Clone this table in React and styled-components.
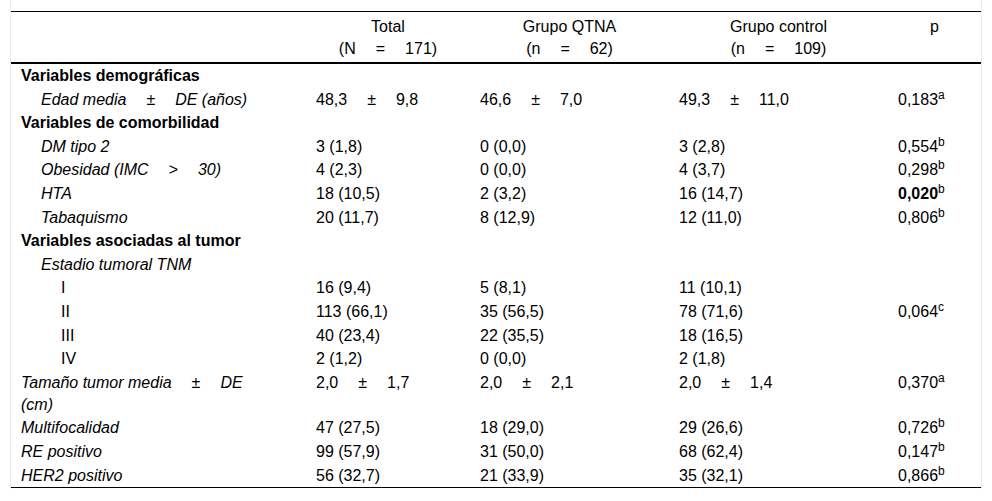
import React from "react";
import styled, { createGlobalStyle } from "styled-components";

const Global = createGlobalStyle`
  html, body {
    margin: 0;
    padding: 0;
    background: #ffffff;
  }
  body {
    font-family: Arial, "Liberation Sans", sans-serif;
    color: #000000;
  }
`;

const Frame = styled.div`
  box-sizing: border-box;
  width: 972px;
  margin-left: 10px;
  padding: 11px 0 1px;
  border-left: 1px solid #ebebeb;
  border-right: 1px solid #ebebeb;
`;

const Table = styled.table`
  width: 970px;
  border-collapse: collapse;
  table-layout: fixed;
  font-size: 16px;
  line-height: 22px;
  border-top: 1px solid #000;
  border-bottom: 1px solid #000;
`;

const HeadRow = styled.tr`
  border-bottom: 2px solid #000;
`;

const HeadCell = styled.th`
  font-weight: normal;
  text-align: center;
  vertical-align: top;
  padding: 4px 10px 2px;
`;

const LabelCell = styled.td`
  vertical-align: top;
  padding: 1px 36px 0.6px ${(p) => 10 + (p.$level || 0) * 20}px;
  font-weight: ${(p) => (p.$bold ? "bold" : "normal")};
  font-style: ${(p) => (p.$italic ? "italic" : "normal")};
`;

const DataCell = styled.td`
  vertical-align: top;
  padding: 1px 10px 0.6px;
  white-space: nowrap;
`;

const Gap = styled.span`
  display: inline-block;
  width: ${(p) => p.$w || 20}px;
`;

const Sup = styled.sup`
  font-size: 12px;
  line-height: 0;
  font-weight: normal;
  vertical-align: 6px;
`;

const Strong = styled.b`
  font-weight: bold;
`;

const PM = ({ a, b }) => (
  <>
    {a}
    <Gap />±<Gap />
    {b}
  </>
);

const PVal = ({ v, s, bold }) => (
  <>
    {bold ? <Strong>{v}</Strong> : v}
    <Sup>{s}</Sup>
  </>
);

const Section = ({ children }) => (
  <tr>
    <LabelCell $bold>{children}</LabelCell>
    <DataCell />
    <DataCell />
    <DataCell />
    <DataCell />
  </tr>
);

const Row = ({ label, level = 1, italic = true, total, qtna, control, p }) => (
  <tr>
    <LabelCell $level={level} $italic={italic}>
      {label}
    </LabelCell>
    <DataCell>{total}</DataCell>
    <DataCell>{qtna}</DataCell>
    <DataCell>{control}</DataCell>
    <DataCell>{p}</DataCell>
  </tr>
);

const Count = ({ n }) => (
  <>
    ({n}
    <Gap />=<Gap />
  </>
);

export default function App() {
  return (
    <>
      <Global />
      <Frame>
        <Table>
          <colgroup>
            <col style={{ width: 295 }} />
            <col style={{ width: 164 }} />
            <col style={{ width: 199 }} />
            <col style={{ width: 219 }} />
            <col style={{ width: 93 }} />
          </colgroup>
          <thead>
            <HeadRow>
              <HeadCell />
              <HeadCell>
                Total
                <br />
                <Count n="N" />
                171)
              </HeadCell>
              <HeadCell>
                Grupo QTNA
                <br />
                <Count n="n" />
                62)
              </HeadCell>
              <HeadCell>
                Grupo control
                <br />
                <Count n="n" />
                109)
              </HeadCell>
              <HeadCell>p</HeadCell>
            </HeadRow>
          </thead>
          <tbody>
            <Section>Variables demográficas</Section>
            <Row
              label={
                <>
                  Edad media<Gap />±<Gap />DE (años)
                </>
              }
              total={<PM a="48,3" b="9,8" />}
              qtna={<PM a="46,6" b="7,0" />}
              control={<PM a="49,3" b="11,0" />}
              p={<PVal v="0,183" s="a" />}
            />
            <Section>Variables de comorbilidad</Section>
            <Row label="DM tipo 2" total="3 (1,8)" qtna="0 (0,0)" control="3 (2,8)" p={<PVal v="0,554" s="b" />} />
            <Row
              label={
                <>
                  Obesidad (IMC<Gap />&gt;<Gap />30)
                </>
              }
              total="4 (2,3)"
              qtna="0 (0,0)"
              control="4 (3,7)"
              p={<PVal v="0,298" s="b" />}
            />
            <Row label="HTA" total="18 (10,5)" qtna="2 (3,2)" control="16 (14,7)" p={<PVal v="0,020" s="b" bold />} />
            <Row label="Tabaquismo" total="20 (11,7)" qtna="8 (12,9)" control="12 (11,0)" p={<PVal v="0,806" s="b" />} />
            <Section>Variables asociadas al tumor</Section>
            <Row label="Estadio tumoral TNM" />
            <Row label="I" level={2} italic={false} total="16 (9,4)" qtna="5 (8,1)" control="11 (10,1)" />
            <Row
              label="II"
              level={2}
              italic={false}
              total="113 (66,1)"
              qtna="35 (56,5)"
              control="78 (71,6)"
              p={<PVal v="0,064" s="c" />}
            />
            <Row label="III" level={2} italic={false} total="40 (23,4)" qtna="22 (35,5)" control="18 (16,5)" />
            <Row label="IV" level={2} italic={false} total="2 (1,2)" qtna="0 (0,0)" control="2 (1,8)" />
            <Row
              level={0}
              label={
                <>
                  Tamaño tumor media<Gap />±<Gap />DE (cm)
                </>
              }
              total={<PM a="2,0" b="1,7" />}
              qtna={<PM a="2,0" b="2,1" />}
              control={<PM a="2,0" b="1,4" />}
              p={<PVal v="0,370" s="a" />}
            />
            <Row level={0} label="Multifocalidad" total="47 (27,5)" qtna="18 (29,0)" control="29 (26,6)" p={<PVal v="0,726" s="b" />} />
            <Row level={0} label="RE positivo" total="99 (57,9)" qtna="31 (50,0)" control="68 (62,4)" p={<PVal v="0,147" s="b" />} />
            <Row level={0} label="HER2 positivo" total="56 (32,7)" qtna="21 (33,9)" control="35 (32,1)" p={<PVal v="0,866" s="b" />} />
          </tbody>
        </Table>
      </Frame>
    </>
  );
}
